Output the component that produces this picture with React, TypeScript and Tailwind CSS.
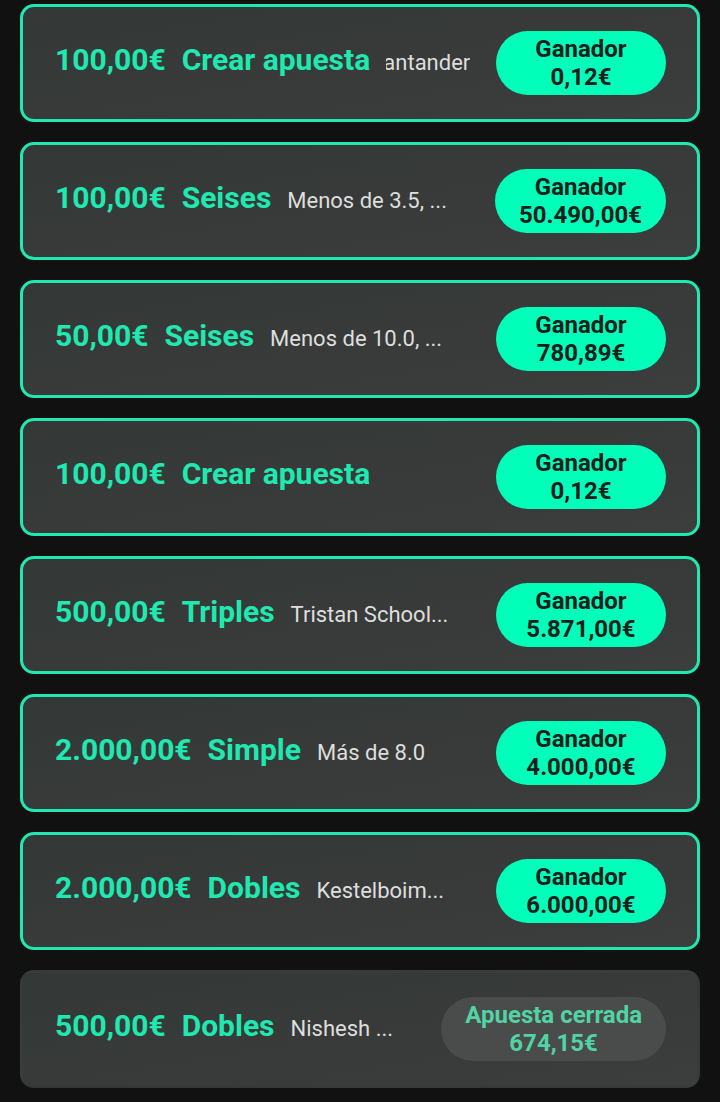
import React from "react";

type Bet = {
  amount: string;
  type: string;
  sub?: string;
  scroll?: boolean;
  status: "win" | "closed";
  value: string;
};

const bets: Bet[] = [
  { amount: "100,00€", type: "Crear apuesta", sub: "Santander", scroll: true, status: "win", value: "0,12€" },
  { amount: "100,00€", type: "Seises", sub: "Menos de 3.5, ...", status: "win", value: "50.490,00€" },
  { amount: "50,00€", type: "Seises", sub: "Menos de 10.0, ...", status: "win", value: "780,89€" },
  { amount: "100,00€", type: "Crear apuesta", status: "win", value: "0,12€" },
  { amount: "500,00€", type: "Triples", sub: "Tristan School...", status: "win", value: "5.871,00€" },
  { amount: "2.000,00€", type: "Simple", sub: "Más de 8.0", status: "win", value: "4.000,00€" },
  { amount: "2.000,00€", type: "Dobles", sub: "Kestelboim...", status: "win", value: "6.000,00€" },
  { amount: "500,00€", type: "Dobles", sub: "Nishesh ...", status: "closed", value: "674,15€" },
];

function Card({ bet }: { bet: Bet }) {
  const closed = bet.status === "closed";
  return (
    <div
      className={`flex h-[118px] items-center rounded-[14px] border-[3px] bg-linear-to-br from-[#333836] to-[#3c3d3d] pl-[32px] pr-[31px] ${
        closed ? "border-transparent" : "border-[#1fe8b0]"
      }`}
    >
      <div className="flex min-w-0 flex-1 items-baseline gap-4 pb-2">
        <span className="shrink-0 text-[30px] font-bold text-[#1fe8b0]">{bet.amount}</span>
        <span className="shrink-0 text-[30px] font-bold text-[#1fe8b0]">{bet.type}</span>
        {bet.sub &&
          (bet.scroll ? (
            <span className="block w-[84px] shrink-0 overflow-hidden whitespace-nowrap text-[22px] text-[#dedede]">
              <span className="-ml-[16px] inline-block">{bet.sub}</span>
            </span>
          ) : (
            <span className="whitespace-nowrap text-[22px] text-[#dedede]">{bet.sub}</span>
          ))}
      </div>
      <div
        className={`flex h-[64px] min-w-[170px] shrink-0 flex-col items-center justify-center rounded-full px-6 text-center text-[24px] font-bold leading-[28px] ${
          closed ? "bg-[#4a4b4b] text-[#52d3a5]" : "bg-[#00ffb8] text-[#13201c]"
        }`}
      >
        <span>{closed ? "Apuesta cerrada" : "Ganador"}</span>
        <span>{bet.value}</span>
      </div>
    </div>
  );
}

export default function App() {
  return (
    <div
      className="min-h-[1102px] w-full bg-[#111111] px-5 pt-[4px]"
      style={{ fontFamily: "Roboto, 'Noto Sans', sans-serif" }}
    >
      <div className="flex flex-col gap-5">
        {bets.map((b, i) => (
          <Card key={i} bet={b} />
        ))}
      </div>
    </div>
  );
}
